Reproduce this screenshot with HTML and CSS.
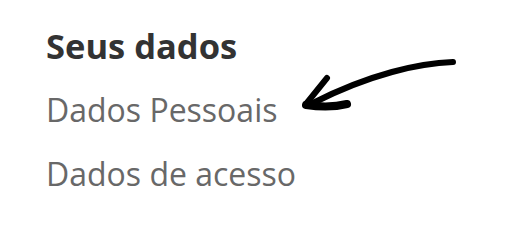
FILE: index.html
```html
<!DOCTYPE html>
<html>
  <head>
    <meta charset="utf-8" />
    <title>Seus dados</title>
    <link rel="stylesheet" href="styles.css">
  </head>
  <body>
    <div class="menu">
      <h2>Seus dados</h2>
      <a href="#" class="item">Dados Pessoais</a>
      <a href="#" class="item">Dados de acesso</a>

      <!-- hand drawn pointer -->
      <svg class="arrow" viewBox="296 56 162 56" width="162" height="56">
        <g fill="none" stroke="#000" stroke-linecap="round" stroke-linejoin="round">
          <path d="M453,62 C420,63 370,74 313,103" stroke-width="6" />
          <path d="M327,78 L306,104" stroke-width="6" />
          <path d="M306,105 C320,107 335,107 347,104" stroke-width="8" />
        </g>
      </svg>
    </div>
  </body>
</html>
```

FILE: styles.css
```css
body {
  margin: 0;
  background: #fff;
  font-family: "Open Sans", "Noto Sans", sans-serif;
}
.menu {
  position: relative;
  width: 505px;
  height: 226px;
  padding: 23px 0 0 46px;
  box-sizing: border-box;
  display: flex;
  flex-direction: column;
  align-items: flex-start;
}
.menu h2 {
  margin: 0;
  font-size: 34.5px;
  font-weight: 700;
  line-height: 46px;
  color: #333;
}
.item {
  margin-top: 19px;
  font-size: 32px;
  line-height: 44px;
  color: #686868;
  text-decoration: none;
}
.item + .item {
  margin-top: 20px;
}
.arrow {
  position: absolute;
  left: 296px;
  top: 56px;
}
```
